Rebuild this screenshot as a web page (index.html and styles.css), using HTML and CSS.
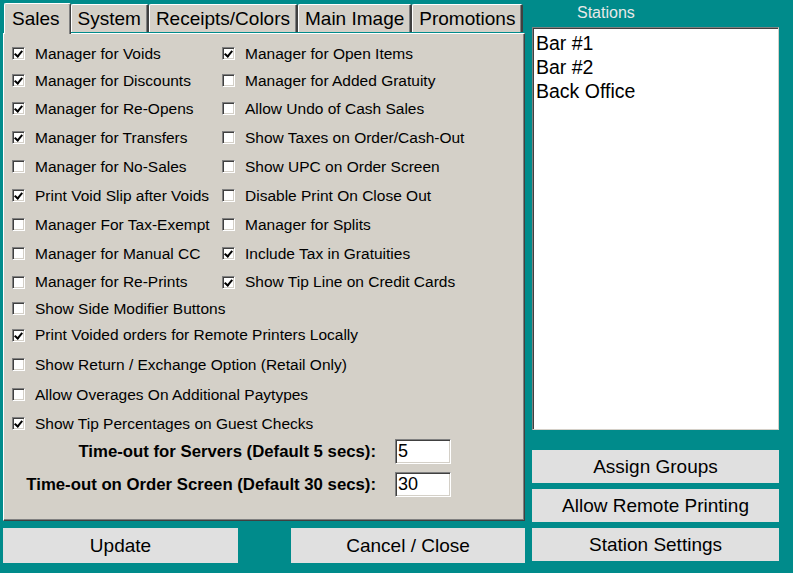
FILE: index.html
```html
<!DOCTYPE html>
<html>
<head>
<meta charset="utf-8">
<link rel="stylesheet" href="styles.css">
</head>
<body>
<div class="app">
  <div class="left">
    <div class="tabs">
      <div class="tab active">Sales</div>
      <div class="tab">System</div>
      <div class="tab">Receipts/Colors</div>
      <div class="tab">Main Image</div>
      <div class="tab">Promotions</div>
    </div>
    <div class="panel">
      <div class="opts">
        <label class="opt h27"><span class="cb on"></span>Manager for Voids</label>
        <label class="opt h27"><span class="cb on"></span>Manager for Open Items</label>
        <label class="opt h27"><span class="cb on"></span>Manager for Discounts</label>
        <label class="opt h27"><span class="cb"></span>Manager for Added Gratuity</label>
        <label class="opt"><span class="cb on"></span>Manager for Re-Opens</label>
        <label class="opt"><span class="cb"></span>Allow Undo of Cash Sales</label>
        <label class="opt"><span class="cb on"></span>Manager for Transfers</label>
        <label class="opt"><span class="cb"></span>Show Taxes on Order/Cash-Out</label>
        <label class="opt"><span class="cb"></span>Manager for No-Sales</label>
        <label class="opt"><span class="cb"></span>Show UPC on Order Screen</label>
        <label class="opt"><span class="cb on"></span>Print Void Slip after Voids</label>
        <label class="opt"><span class="cb"></span>Disable Print On Close Out</label>
        <label class="opt"><span class="cb"></span>Manager For Tax-Exempt</label>
        <label class="opt"><span class="cb"></span>Manager for Splits</label>
        <label class="opt"><span class="cb"></span>Manager for Manual CC</label>
        <label class="opt"><span class="cb on"></span>Include Tax in Gratuities</label>
        <label class="opt h28"><span class="cb"></span>Manager for Re-Prints</label>
        <label class="opt h28"><span class="cb on"></span>Show Tip Line on Credit Cards</label>
        <label class="opt wide h25"><span class="cb"></span>Show Side Modifier Buttons</label>
        <label class="opt wide h28"><span class="cb on"></span>Print Voided orders for Remote Printers Locally</label>
        <label class="opt wide h31"><span class="cb"></span>Show Return / Exchange Option (Retail Only)</label>
        <label class="opt wide"><span class="cb"></span>Allow Overages On Additional Paytypes</label>
        <label class="opt wide"><span class="cb on"></span>Show Tip Percentages on Guest Checks</label>
      </div>
      <div class="timeouts">
        <div class="trow"><span class="tlabel">Time-out for Servers (Default 5 secs):</span><span class="tinput">5</span></div>
        <div class="trow"><span class="tlabel">Time-out on Order Screen (Default 30 secs):</span><span class="tinput">30</span></div>
      </div>
    </div>
    <div class="actions">
      <div class="btn btn-update">Update</div>
      <div class="btn btn-cancel">Cancel / Close</div>
    </div>
  </div>
  <div class="right">
    <div class="stations-label">Stations</div>
    <div class="listbox">
      <div class="item">Bar #1</div>
      <div class="item">Bar #2</div>
      <div class="item">Back Office</div>
    </div>
    <div class="side-buttons">
      <div class="btn">Assign Groups</div>
      <div class="btn">Allow Remote Printing</div>
      <div class="btn">Station Settings</div>
    </div>
  </div>
</div>
</body>
</html>
```

FILE: styles.css
```css
* { box-sizing: border-box; }
html, body {
  margin: 0;
  padding: 0;
  background: #008b8b;
  font-family: "Liberation Sans", Arial, sans-serif;
  width: 793px;
  height: 573px;
  overflow: hidden;
}
.app {
  display: flex;
  gap: 7px;
  padding: 3px 0 0 3px;
}
.left {
  width: 522px;
  display: flex;
  flex-direction: column;
}
.tabs {
  display: flex;
  height: 30px;
  align-items: flex-end;
  padding-left: 1px;
  position: relative;
  z-index: 1;
}
.tab {
  height: 28px;
  padding: 0 6px;
  font-size: 19px;
  line-height: 27px;
  color: #000;
  background: #d4d0c8;
  border-top: 1px solid #fff;
  border-left: 1px solid #fff;
  border-right: 2px solid #404040;
  border-top-left-radius: 2px;
  border-top-right-radius: 2px;
  box-shadow: inset -1px 0 0 #808080;
  margin-bottom: 1px;
}
.tab.active {
  height: 31px;
  padding: 0 10px 0 7px;
  line-height: 30px;
  margin-bottom: -1px;
  border-right: 1px solid #404040;
  box-shadow: inset -1px 0 0 #808080;
}
.panel {
  height: 488px;
  background: #d4d0c8;
  border-top: 1px solid #fff;
  border-left: 1px solid #fff;
  border-right: 1px solid #404040;
  border-bottom: 1px solid #404040;
  box-shadow: inset -1px -1px 0 #808080;
  padding: 6px 0 0 8px;
}
.opts {
  display: grid;
  grid-template-columns: 210px 1fr;
}
.opt {
  height: 29px;
  display: flex;
  align-items: center;
  font-size: 15.5px;
  color: #000;
  white-space: nowrap;
}
.opt.wide { grid-column: 1 / span 2; }
.opt.h25 { height: 25px; }
.opt.h27 { height: 27px; }
.opt.h28 { height: 28px; }
.opt.h31 { height: 31px; }
.cb {
  width: 13px;
  height: 13px;
  flex: none;
  margin-right: 10px;
  background: #fff;
  border-top: 1px solid #808080;
  border-left: 1px solid #808080;
  border-right: 1px solid #fff;
  border-bottom: 1px solid #fff;
  box-shadow: inset 1px 1px 0 #404040, inset -1px -1px 0 #d4d0c8;
  position: relative;
}
.cb.on::after {
  content: "";
  position: absolute;
  left: 3px;
  top: 1px;
  width: 3px;
  height: 6px;
  border-right: 2px solid #000;
  border-bottom: 2px solid #000;
  transform: rotate(40deg);
  transform-origin: center;
}
.timeouts {
  display: flex;
  flex-direction: column;
  gap: 8px;
  margin-top: 1px;
}
.trow {
  display: flex;
  align-items: center;
}
.tlabel {
  width: 364px;
  text-align: right;
  font-weight: bold;
  font-size: 16.75px;
  color: #000;
  margin-right: 19px;
  white-space: nowrap;
}
.tinput {
  width: 56px;
  height: 25px;
  background: #fff;
  border-top: 1px solid #808080;
  border-left: 1px solid #808080;
  border-right: 1px solid #fff;
  border-bottom: 1px solid #fff;
  box-shadow: inset 1px 1px 0 #404040, inset -1px -1px 0 #d4d0c8;
  font-size: 18px;
  line-height: 23px;
  padding-left: 2px;
  color: #000;
}
.actions {
  display: flex;
  justify-content: space-between;
  margin-top: 7px;
}
.btn {
  background: #e0e0e0;
  color: #000;
  font-size: 19px;
  text-align: center;
  height: 33px;
  line-height: 33px;
}
.btn-update { width: 235px; height: 35px; line-height: 35px; }
.btn-cancel { width: 234px; height: 35px; line-height: 35px; }
.right {
  width: 247px;
  display: flex;
  flex-direction: column;
}
.stations-label {
  height: 24px;
  padding-left: 45px;
  color: #e8e8e8;
  font-size: 16px;
  line-height: 20px;
}
.listbox {
  height: 403px;
  background: #fff;
  border-top: 1px solid #808080;
  border-left: 1px solid #808080;
  border-right: 1px solid #d4d0c8;
  border-bottom: 1px solid #d4d0c8;
  box-shadow: inset 1px 1px 0 #404040;
  padding: 3px 0 0 3px;
}
.item {
  font-size: 19.5px;
  line-height: 24px;
  color: #000;
}
.side-buttons {
  display: flex;
  flex-direction: column;
  gap: 6px;
  margin-top: 20px;
}
```
